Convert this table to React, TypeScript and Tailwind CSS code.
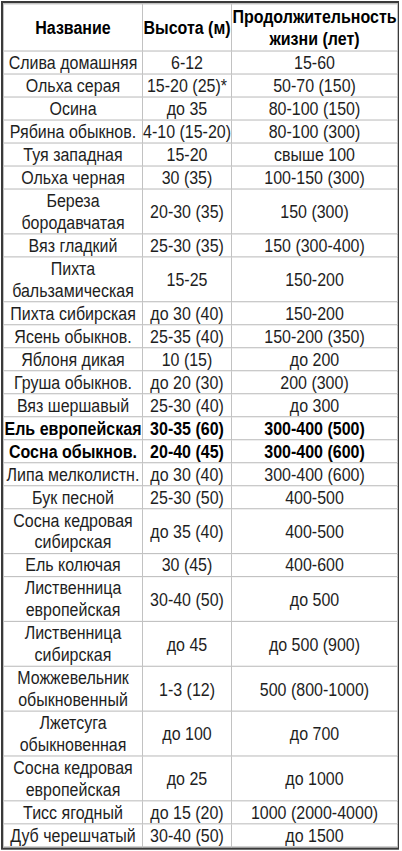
import React from "react";

type Row = {
    name: string[];
    height: string;
    life: string;
    bold?: boolean;
};

const rows: Row[] = [
    { name: ["Слива домашняя"], height: "6-12", life: "15-60" },
    { name: ["Ольха серая"], height: "15-20 (25)*", life: "50-70 (150)" },
    { name: ["Осина"], height: "до 35", life: "80-100 (150)" },
    { name: ["Рябина обыкнов."], height: "4-10 (15-20)", life: "80-100 (300)" },
    { name: ["Туя западная"], height: "15-20", life: "свыше 100" },
    { name: ["Ольха черная"], height: "30 (35)", life: "100-150 (300)" },
    { name: ["Береза", "бородавчатая"], height: "20-30 (35)", life: "150 (300)" },
    { name: ["Вяз гладкий"], height: "25-30 (35)", life: "150 (300-400)" },
    { name: ["Пихта", "бальзамическая"], height: "15-25", life: "150-200" },
    { name: ["Пихта сибирская"], height: "до 30 (40)", life: "150-200" },
    { name: ["Ясень обыкнов."], height: "25-35 (40)", life: "150-200 (350)" },
    { name: ["Яблоня дикая"], height: "10 (15)", life: "до 200" },
    { name: ["Груша обыкнов."], height: "до 20 (30)", life: "200 (300)" },
    { name: ["Вяз шершавый"], height: "25-30 (40)", life: "до 300" },
    { name: ["Ель европейская"], height: "30-35 (60)", life: "300-400 (500)", bold: true },
    { name: ["Сосна обыкнов."], height: "20-40 (45)", life: "300-400 (600)", bold: true },
    { name: ["Липа мелколистн."], height: "до 30 (40)", life: "300-400 (600)" },
    { name: ["Бук песной"], height: "25-30 (50)", life: "400-500" },
    { name: ["Сосна кедровая", "сибирская"], height: "до 35 (40)", life: "400-500" },
    { name: ["Ель колючая"], height: "30 (45)", life: "400-600" },
    { name: ["Лиственница", "европейская"], height: "30-40 (50)", life: "до 500" },
    { name: ["Лиственница", "сибирская"], height: "до 45", life: "до 500 (900)" },
    { name: ["Можжевельник", "обыкновенный"], height: "1-3 (12)", life: "500 (800-1000)" },
    { name: ["Лжетсуга", "обыкновенная"], height: "до 100", life: "до 700" },
    { name: ["Сосна кедровая", "европейская"], height: "до 25", life: "до 1000" },
    { name: ["Тисс ягодный"], height: "до 15 (20)", life: "1000 (2000-4000)" },
    { name: ["Дуб черешчатый"], height: "30-40 (50)", life: "до 1500" },
];

const cell = "border border-[#c2c2c2] p-0 text-center align-middle whitespace-nowrap";

export default function App() {
    return (
        <div className="min-h-[851px] w-[402px] bg-white font-['Liberation_Sans',Arial,sans-serif] text-[16px] leading-[19px] text-[#1e1e1e]">
            <div className="ml-px mt-px w-[398px] origin-top scale-y-[1.15] border-2 border-[#3a3a3a]">
                <table className="w-full table-fixed border-collapse">
                    <colgroup>
                        <col className="w-[139px]" />
                        <col className="w-[89px]" />
                        <col className="w-[166px]" />
                    </colgroup>
                    <thead>
                        <tr className="font-bold text-black">
                            <th className={`${cell} py-px`}>Название</th>
                            <th className={`${cell} py-px`}>Высота (м)</th>
                            <th className={`${cell} py-px`}>
                                Продолжительность
                                <br />
                                жизни (лет)
                            </th>
                        </tr>
                    </thead>
                    <tbody>
                        {rows.map((row, i) => (
                            <tr key={i} className={row.bold ? "font-bold text-black" : ""}>
                                <td className={cell}>
                                    {row.name.map((line, j) => (
                                        <div key={j}>{line}</div>
                                    ))}
                                </td>
                                <td className={cell}>{row.height}</td>
                                <td className={cell}>{row.life}</td>
                            </tr>
                        ))}
                    </tbody>
                </table>
            </div>
        </div>
    );
}
